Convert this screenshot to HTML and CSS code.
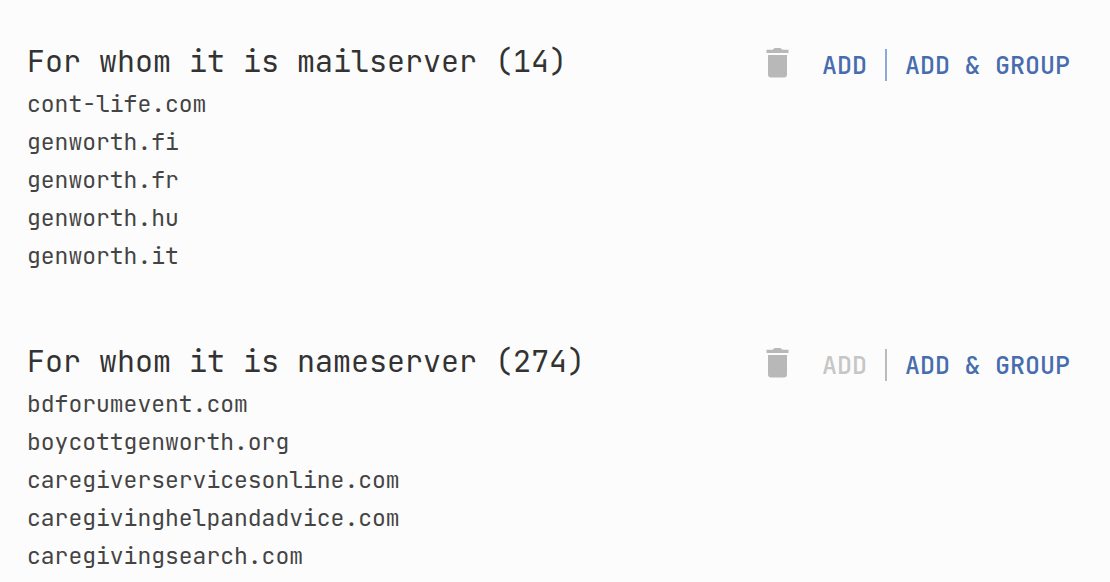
FILE: index.html
```html
<!DOCTYPE html>
<html lang="en">
<head>
<meta charset="utf-8">
<title>Domain relations</title>
<link rel="stylesheet" href="styles.css">
</head>
<body>
<main class="page">
  <section class="group">
    <header class="group-header">
      <h2 class="title">For whom it is mailserver (14)</h2>
      <div class="actions">
        <button class="icon-button" type="button" aria-label="Delete">
          <svg class="trash" viewBox="0 0 24 30" aria-hidden="true"><path d="M0.5 1.8h6l1.5-1.3q.5-.4 1-.4h5q.5 0 1 .4l1.5 1.3h6v3.2h-22zM2 7h19v19.5q0 3-3 3H5q-3 0-3-3z"/></svg>
        </button>
        <button class="action" type="button">ADD</button>
        <span class="divider divider-active"></span>
        <button class="action" type="button">ADD &amp; GROUP</button>
      </div>
    </header>
    <ul class="domains">
      <li>cont-life.com</li>
      <li>genworth.fi</li>
      <li>genworth.fr</li>
      <li>genworth.hu</li>
      <li>genworth.it</li>
    </ul>
  </section>
  <section class="group">
    <header class="group-header">
      <h2 class="title">For whom it is nameserver (274)</h2>
      <div class="actions">
        <button class="icon-button" type="button" aria-label="Delete">
          <svg class="trash" viewBox="0 0 24 30" aria-hidden="true"><path d="M0.5 1.8h6l1.5-1.3q.5-.4 1-.4h5q.5 0 1 .4l1.5 1.3h6v3.2h-22zM2 7h19v19.5q0 3-3 3H5q-3 0-3-3z"/></svg>
        </button>
        <button class="action" type="button" disabled>ADD</button>
        <span class="divider"></span>
        <button class="action" type="button">ADD &amp; GROUP</button>
      </div>
    </header>
    <ul class="domains">
      <li>bdforumevent.com</li>
      <li>boycottgenworth.org</li>
      <li>caregiverservicesonline.com</li>
      <li>caregivinghelpandadvice.com</li>
      <li>caregivingsearch.com</li>
    </ul>
  </section>
</main>
</body>
</html>
```
FILE: styles.css
```css
body {
  margin: 0;
  background: #fcfcfc;
  color: #333;
  font-family: "JetBrains Mono", "DejaVu Sans Mono", monospace;
}
.page {
  display: flex;
  flex-direction: column;
  gap: 64px;
  padding: 39px 40px 8px 27px;
}
.group-header {
  display: flex;
  align-items: flex-start;
  justify-content: space-between;
  margin-bottom: 1px;
}
.title {
  margin: 0;
  font-size: 30px;
  font-weight: 400;
  line-height: 45px;
}
.actions {
  display: flex;
  align-items: flex-start;
  padding-top: 9px;
}
.icon-button,
.action {
  padding: 0;
  border: 0;
  background: none;
  font: inherit;
}
.icon-button {
  display: flex;
  margin-right: 32px;
}
.trash {
  width: 24px;
  height: 30px;
  fill: #b8b8b8;
}
.action {
  color: #476dae;
  font-size: 25px;
  font-weight: 500;
  line-height: 34px;
}
.action:disabled {
  color: #c6c6c6;
}
.divider {
  width: 2px;
  height: 32px;
  margin: 1px 18px 0;
  background: #bbb;
}
.divider-active {
  background: #8ea9d6;
}
.domains {
  margin: 0;
  padding: 0;
  color: #444;
  list-style: none;
  font-size: 23px;
  line-height: 38px;
}
```
